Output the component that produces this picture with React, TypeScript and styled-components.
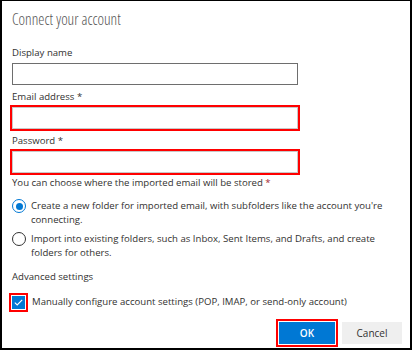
import styled, { createGlobalStyle } from "styled-components";

const GlobalStyle = createGlobalStyle`
  html, body {
    margin: 0;
    padding: 0;
    background: #fff;
  }

  body {
    font-family: "Open Sans", "Noto Sans", sans-serif;
    color: #323130;
  }
`;

export default function App() {
  return (
    <>
      <GlobalStyle />
      <Dialog>
        <Title>Connect your account</Title>
        <Field>
          <Label>Display name</Label>
          <TextInput type="text" />
        </Field>
        <Field>
          <Label>Email address *</Label>
          <TextInput type="email" $flagged />
        </Field>
        <Field>
          <Label>Password *</Label>
          <TextInput type="password" $flagged />
        </Field>
        <Prompt>
          You can choose where the imported email will be stored <Required>*</Required>
        </Prompt>
        <Options>
          <Option>
            <Radio $checked />
            <span>Create a new folder for imported email, with subfolders like the account you're connecting.</span>
          </Option>
          <Option>
            <Radio />
            <span>Import into existing folders, such as Inbox, Sent Items, and Drafts, and create folders for others.</span>
          </Option>
        </Options>
        <SectionLabel>Advanced settings</SectionLabel>
        <CheckRow>
          <Checkbox $flagged>
            <svg width="9" height="7" viewBox="0 0 9 7">
              <path d="M0.8 3.6 L3.2 5.9 L8.2 0.8" fill="none" stroke="#fff" strokeWidth="1.1" />
            </svg>
          </Checkbox>
          <span>Manually configure account settings (POP, IMAP, or send-only account)</span>
        </CheckRow>
        <Footer>
          <Button $primary $flagged>OK</Button>
          <Button>Cancel</Button>
        </Footer>
      </Dialog>
    </>
  );
}

const Dialog = styled.div`
  box-sizing: border-box;
  width: 412px;
  height: 350px;
  border: solid #000;
  border-width: 1px 2px 2px 2px;
  padding: 6px 8px 0 10px;
  display: flex;
  flex-direction: column;
  font-size: 9.6px;
  line-height: 14px;
`;

const Title = styled.h1`
  margin: 0;
  font-size: 15.5px;
  line-height: 24px;
  font-weight: 300;
  font-stretch: 80%;
  color: #555;
`;

const Field = styled.div`
  display: flex;
  flex-direction: column;
  gap: 3px;
  margin-top: 5px;

  &:first-of-type {
    margin-top: 15px;
  }
`;

const Label = styled.label`
  display: block;
`;

const TextInput = styled.input<{ $flagged?: boolean }>`
  box-sizing: border-box;
  width: 286px;
  height: 22px;
  margin: 0;
  padding: 0 6px;
  border: 1px solid ${(p) => (p.$flagged ? "#c8c8c8" : "#6e6e6e")};
  border-radius: 0;
  background: #fff;
  outline: ${(p) => (p.$flagged ? "2px solid #f00" : "none")};
  outline-offset: 0;
`;

const Prompt = styled.div`
  margin-top: 3px;
`;

const Required = styled.span`
  color: #a4262c;
`;

const Options = styled.div`
  display: flex;
  flex-direction: column;
  gap: 5px;
  margin-top: 9px;
`;

const Option = styled.label`
  display: flex;
  align-items: flex-start;
  gap: 5px;
  padding-right: 6px;
`;

const Radio = styled.span<{ $checked?: boolean }>`
  box-sizing: border-box;
  flex: none;
  position: relative;
  width: 14px;
  height: 14px;
  border-radius: 50%;
  border: 1px solid ${(p) => (p.$checked ? "#0078d4" : "#333")};

  &::after {
    content: "";
    display: ${(p) => (p.$checked ? "block" : "none")};
    position: absolute;
    left: 2.5px;
    top: 2.5px;
    width: 7px;
    height: 7px;
    border-radius: 50%;
    background: #0078d4;
  }
`;

const SectionLabel = styled.div`
  margin-top: 10px;
`;

const CheckRow = styled.label`
  display: flex;
  align-items: center;
  gap: 7px;
  margin-top: 11px;
`;

const Checkbox = styled.span<{ $flagged?: boolean }>`
  box-sizing: border-box;
  flex: none;
  display: flex;
  align-items: center;
  justify-content: center;
  width: 13px;
  height: 13px;
  background: #0078d4;
  outline: ${(p) => (p.$flagged ? "2px solid #f00" : "none")};
  outline-offset: 1px;
`;

const Footer = styled.div`
  display: flex;
  justify-content: flex-end;
  gap: 7px;
  margin-top: 13px;
`;

const Button = styled.button<{ $primary?: boolean; $flagged?: boolean }>`
  box-sizing: border-box;
  height: 22px;
  width: ${(p) => (p.$primary ? "56px" : "60px")};
  margin: 0;
  padding: 0;
  border: none;
  border-radius: 0;
  font-family: inherit;
  font-size: 10px;
  font-weight: ${(p) => (p.$primary ? 600 : 400)};
  color: ${(p) => (p.$primary ? "#fff" : "#323130")};
  background: ${(p) => (p.$primary ? "#0078d4" : "#efefef")};
  outline: ${(p) => (p.$flagged ? "2px solid #f00" : "none")};
  outline-offset: 1px;
`;
